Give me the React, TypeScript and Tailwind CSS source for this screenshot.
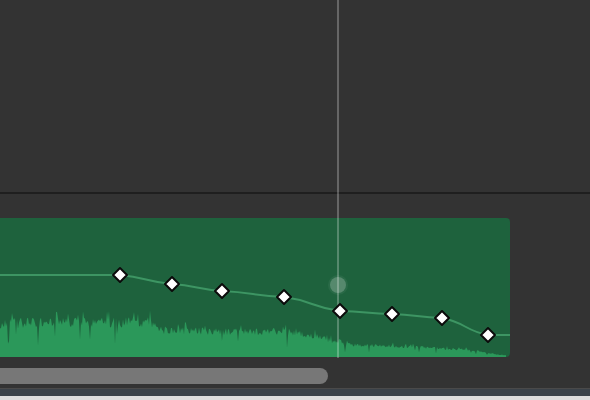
import React from 'react';

// automation points, in region coordinates (region top = 218)
const points: [number, number][] = [
    [120, 57],
    [172, 66],
    [222, 73],
    [284, 79],
    [340, 93],
    [392, 96],
    [442, 100],
    [488, 117],
];

const envelope: [number, number][] = [
    [0, 38], [150, 39], [162, 30], [290, 28], [318, 23], [345, 14],
    [420, 11], [470, 8], [495, 3], [506, 2],
];

function envAt(x: number) {
    for (let i = 0; i < envelope.length - 1; i++) {
        const [x0, y0] = envelope[i];
        const [x1, y1] = envelope[i + 1];
        if (x >= x0 && x <= x1) return y0 + ((y1 - y0) * (x - x0)) / (x1 - x0);
    }
    return 2;
}

function makeWave() {
    let seed = 11;
    const rand = () => {
        seed = (seed * 16807) % 2147483647;
        return seed / 2147483647;
    };
    const h = 139;
    let d = `M0 ${h}`;
    for (let x = 0; x <= 506; x++) {
        const e = envAt(x);
        let a = e * (0.75 + 0.28 * rand());
        if (rand() < 0.08) a = e * (1.05 + 0.15 * rand());
        if (rand() < 0.04) a = e * (0.3 + 0.3 * rand());
        d += ` L${x} ${(h - a).toFixed(1)}`;
    }
    d += ` L506 ${h} Z`;
    return d;
}

const wavePath = makeWave();

function linePath() {
    let d = `M0 57 L${points[0][0]} ${points[0][1]}`;
    for (let i = 1; i < points.length; i++) {
        const [px, py] = points[i - 1];
        const [x, y] = points[i];
        const mx = (px + x) / 2;
        d += ` C${mx} ${py + (y - py) * 0.25} ${mx} ${py + (y - py) * 0.75} ${x} ${y}`;
    }
    d += ' L510 117';
    return d;
}

function Diamond({ x, y }: { x: number; y: number }) {
    return (
        <polygon
            points={`${x},${y - 7} ${x + 7},${y} ${x},${y + 7} ${x - 7},${y}`}
            fill="#ffffff"
            stroke="#0b0b0b"
            strokeWidth={2}
            strokeLinejoin="round"
        />
    );
}

export default function App() {
    return (
        <div className="relative w-[590px] h-[400px] overflow-hidden bg-[#333333] flex flex-col">
            {/* empty track area */}
            <div className="h-[192px] shrink-0" />
            <div className="h-[2px] shrink-0 bg-[#1f1f1f]" />

            {/* lane with region */}
            <div className="pt-[24px] shrink-0">
                <div className="relative w-[510px] h-[139px] bg-[#1e623d] rounded-r-[4px] overflow-hidden">
                    <svg className="absolute inset-0" width="510" height="139" viewBox="0 0 510 139">
                        <path d={wavePath} fill="#2b985a" />
                        <path d={linePath()} fill="none" stroke="#3d9563" strokeWidth={2} />
                    </svg>
                </div>
            </div>

            {/* horizontal scrollbar */}
            <div className="pt-[11px] h-[31px] shrink-0">
                <div className="w-[328px] h-[16px] bg-[#777777] rounded-r-full" />
            </div>
            <div className="h-px shrink-0 bg-[#4a4a4a]" />
            <div className="h-[7px] shrink-0 bg-[#3b4249]" />
            <div className="flex-1 bg-[#dddddd]" />

            {/* playhead + automation points overlay */}
            <div className="absolute left-[337px] top-0 w-[2px] h-[358px] bg-white/25" />
            <div className="absolute left-[330px] top-[277px] w-[16px] h-[16px] rounded-full bg-white/25 ring-2 ring-white/5" />
            <svg className="absolute left-0 top-[218px]" width="510" height="139" viewBox="0 0 510 139">
                {points.map(([x, y]) => (
                    <Diamond key={x} x={x} y={y} />
                ))}
            </svg>
        </div>
    );
}
